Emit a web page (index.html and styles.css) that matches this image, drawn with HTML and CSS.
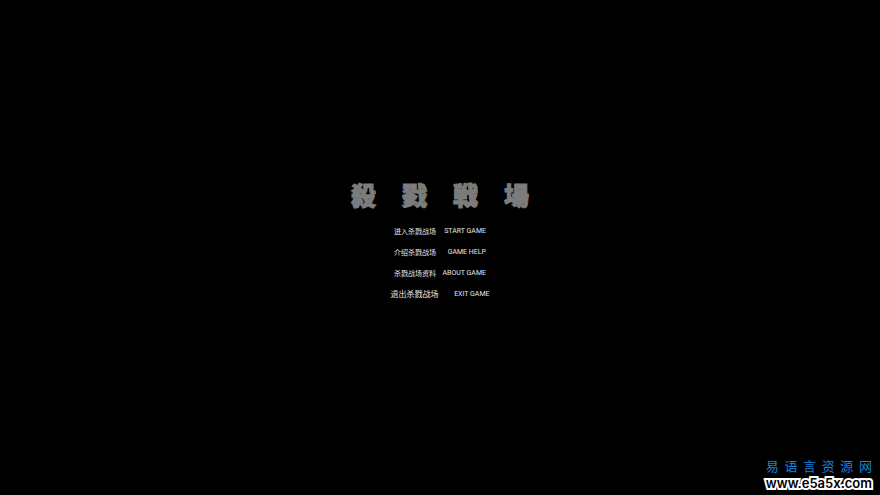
FILE: index.html
```
<!DOCTYPE html>
<html lang="zh-CN">
<head>
    <meta charset="UTF-8">
    <meta name="viewport" content="width=device-width, initial-scale=1.0">
    <title>殺戮戦場</title>
    <link rel="stylesheet" href="styles.css">
</head>
<body>

    <main class="screen">
        <h1 class="title">
            <span>殺</span>
            <span>戮</span>
            <span>戦</span>
            <span>場</span>
        </h1>

        <!-- Main Menu -->
        <nav class="menu">
            <button type="button" class="menu-item"><span>进入杀戮战场</span><span class="en">START GAME</span></button>
            <button type="button" class="menu-item"><span>介绍杀戮战场</span><span class="en">GAME HELP</span></button>
            <button type="button" class="menu-item"><span>杀戮战场资料</span><span class="en">ABOUT GAME</span></button>
            <button type="button" class="menu-item exit"><span>退出杀戮战场</span><span class="en">EXIT GAME</span></button>
        </nav>
    </main>

    <!-- Site Mark -->
    <a class="site-mark" href="#">
        <span class="site-name"><span>易</span><span>语</span><span>言</span><span>资</span><span>源</span><span>网</span></span>
        <span class="site-url">www.e5a5x.com</span>
    </a>

</body>
</html>
```

FILE: styles.css
```
body {
    margin: 0;
    min-height: 100vh;
    background-color: #000;
    color: #fff;
    font-family: "Liberation Sans", "Noto Sans CJK SC", sans-serif;
    overflow: hidden;
}
.screen {
    display: flex;
    flex-direction: column;
    align-items: center;
    justify-content: center;
    min-height: 100vh;
    box-sizing: border-box;
    padding-bottom: 14px;
}
.title {
    display: flex;
    gap: 26px;
    margin: 0 0 16px;
    color: #7c7c7c;
    font-family: "Noto Sans CJK JP", sans-serif;
    font-size: 25px;
    font-weight: 900;
    line-height: 28px;
    -webkit-text-stroke: 1px #7c7c7c;
}
.menu {
    display: flex;
    flex-direction: column;
    align-items: center;
    gap: 7px;
}
.menu-item {
    display: flex;
    align-items: center;
    justify-content: space-between;
    width: 92px;
    padding: 0;
    border: 0;
    background: none;
    color: #e6e6e6;
    font-family: "Noto Sans CJK SC", sans-serif;
    font-size: 7px;
    line-height: 14px;
    white-space: nowrap;
    cursor: pointer;
}
.menu-item:hover {
    color: #fff;
}
.en {
    font-family: Roboto, Arial, sans-serif;
    font-size: 7px;
}
.exit {
    width: 99px;
    font-size: 8px;
}
.site-mark {
    position: absolute;
    right: 8px;
    bottom: 5px;
    display: flex;
    flex-direction: column;
    gap: 3px;
    text-decoration: none;
}
.site-name {
    display: flex;
    justify-content: space-between;
    color: #1583dc;
    font-family: "Noto Sans CJK SC", sans-serif;
    font-size: 13px;
    line-height: 14px;
}
.site-url {
    color: #000;
    font-family: Inter, Arial, sans-serif;
    font-size: 13px;
    font-weight: 600;
    line-height: 14px;
    -webkit-text-stroke: 4px #fff;
    paint-order: stroke fill;
}
```
